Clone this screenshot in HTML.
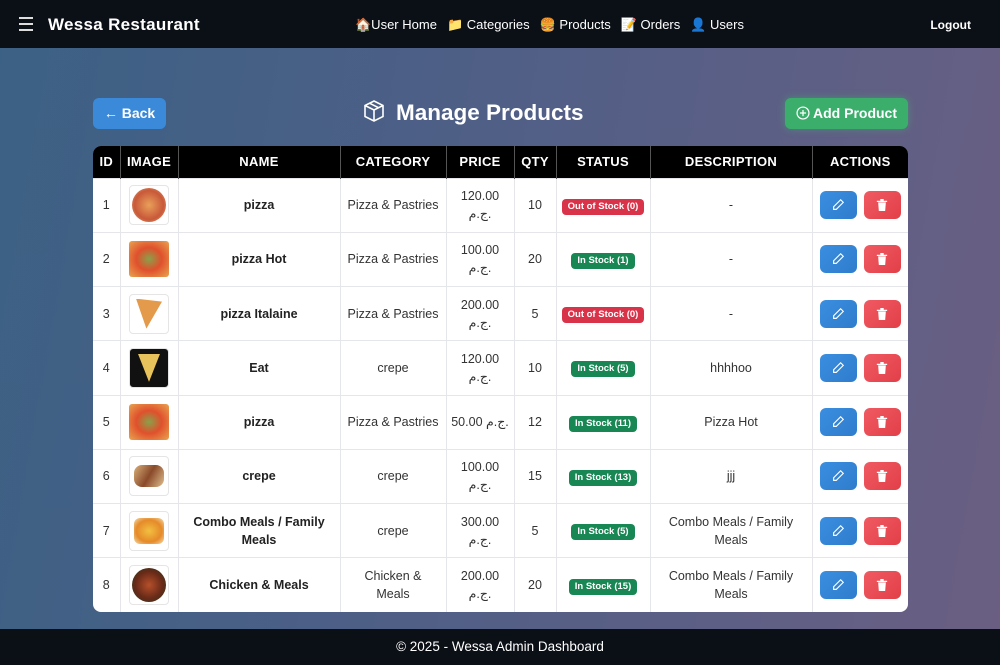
<!DOCTYPE html>
<html><head><meta charset="utf-8"><style>
*{box-sizing:border-box;margin:0;padding:0}
body{width:1000px;height:665px;overflow:hidden;font-family:"Liberation Sans","Noto Sans CJK SC",sans-serif;background:linear-gradient(100deg,#3b6184 0%,#4d5f86 40%,#5e5f85 75%,#6a5f82 100%);position:relative}
.nav{position:absolute;top:0;left:0;width:1000px;height:48px;background:#0b0f16;color:#fff}
.nav .brand{position:absolute;left:48px;top:15px;font-size:17px;font-weight:bold;letter-spacing:.3px}
.nav .ham{position:absolute;left:19px;top:17px;width:14px}
.nav .ham i{display:block;height:2px;background:#ddd;margin-bottom:4px}
.nav .links{position:absolute;left:355px;top:17px;font-size:13px;white-space:nowrap}
.nav .links span{margin-right:10px}
.nav .logout{position:absolute;right:29px;top:18px;font-size:12px;font-weight:bold}
.btn{position:absolute;top:98px;height:31px;border-radius:6px;color:#fff;font-weight:bold;font-size:14px;line-height:31px;text-align:center}
.back{left:93px;width:73px;background:#3a8ad9}
.add{left:785px;width:123px;background:#3cae6c;box-shadow:0 0 8px rgba(60,200,110,.4)}
h1{position:absolute;left:362px;top:99px;color:#fff;font-size:22.5px;font-weight:bold}
table{position:absolute;left:93px;top:146px;width:815px;border-collapse:collapse;table-layout:fixed;background:#fff;border-radius:8px;overflow:hidden;font-size:12.5px;color:#333}
th{background:#000;color:#fff;height:32px;font-size:13px;border-left:1px solid #555;letter-spacing:.3px}
th:first-child{border-left:none}
td{height:54.25px;text-align:center;border-left:1px solid #e4e6e9;border-top:1px solid #e4e6e9;line-height:18px}
td:first-child{border-left:none}
td.n{font-weight:bold;color:#222}
.img{width:40px;height:40px;margin:0 auto;border:1px solid #e5e5e5;border-radius:4px;display:flex;align-items:center;justify-content:center;background:#fff}
.img i{display:block;width:34px;height:34px;border-radius:50%}
.b{display:inline-block;color:#fff;font-weight:bold;font-size:9.5px;padding:2px 6px;border-radius:4px;line-height:12px}
.r{background:#d9334a}.g{background:#198754}
.act{display:flex;gap:7px;justify-content:center}
.act span{width:37px;height:28px;border-radius:6px;display:flex;align-items:center;justify-content:center}
.e{background:linear-gradient(135deg,#3a8ee0,#2f7ccc)}
.d{background:linear-gradient(135deg,#f05a62,#e23f48)}
.foot{position:absolute;left:0;top:629px;width:1000px;height:36px;background:#0b0f16;color:#fff;text-align:center;font-size:13.5px;line-height:36px}
</style></head><body>
<div class="nav"><div class="ham"><i></i><i></i><i></i></div><div class="brand">Wessa Restaurant</div>
<div class="links"><span>🏠User Home</span><span>📁 Categories</span><span>🍔 Products</span><span>📝 Orders</span><span>👤 Users</span></div>
<div class="logout">Logout</div></div>
<div class="btn back">← Back</div>
<h1><svg width="24" height="24" viewBox="0 0 24 24" fill="none" stroke="#fff" stroke-width="1.6" style="vertical-align:-3px;margin-right:10px"><path d="M12 2l9 4.5v11L12 22l-9-4.5v-11z M3 6.5L12 11l9-4.5 M12 11v11 M7.5 4.2l9 4.5"/></svg>Manage Products</h1>
<div class="btn add"><svg width="14" height="14" viewBox="0 0 16 16" fill="none" stroke="#fff" stroke-width="1.4" style="vertical-align:-2px;margin-right:3px"><circle cx="8" cy="8" r="6.8"/><path d="M8 4.5v7M4.5 8h7"/></svg>Add Product</div>
<table>
<colgroup><col style="width:27px"><col style="width:58px"><col style="width:162px"><col style="width:106px"><col style="width:68px"><col style="width:42px"><col style="width:94px"><col style="width:162px"><col style="width:96px"></colgroup>
<tr><th>ID</th><th>IMAGE</th><th>NAME</th><th>CATEGORY</th><th>PRICE</th><th>QTY</th><th>STATUS</th><th>DESCRIPTION</th><th>ACTIONS</th></tr>
<tr><td>1</td><td><div class="img"><i style="background:radial-gradient(#e9a05a,#c8593a 60%,#e6b27a)"></i></div></td><td class="n">pizza</td><td>Pizza &amp; Pastries</td><td>120.00<br>ج.م.</td><td>10</td><td><span class="b r">Out of Stock (0)</span></td><td>-</td><td><div class="act"><span class="e"><svg width="14" height="14" viewBox="0 0 16 16" fill="none" stroke="#fff" stroke-width="1.3"><path d="M11 2l3 3-8 8H3v-3z"/></svg></span><span class="d"><svg width="12" height="14" viewBox="0 0 14 16" fill="#fff"><path d="M1 3h12v1.5H1zM5 1h4v2H5zM2.5 5h9l-.8 10H3.3z"/></svg></span></div></td></tr>
<tr><td>2</td><td><div class="img" style="border:none"><i style="border-radius:3px;width:40px;height:36px;background:radial-gradient(#8aa04a,#e0502c 45%,#e8a550)"></i></div></td><td class="n">pizza Hot</td><td>Pizza &amp; Pastries</td><td>100.00<br>ج.م.</td><td>20</td><td><span class="b g">In Stock (1)</span></td><td>-</td><td><div class="act"><span class="e"><svg width="14" height="14" viewBox="0 0 16 16" fill="none" stroke="#fff" stroke-width="1.3"><path d="M11 2l3 3-8 8H3v-3z"/></svg></span><span class="d"><svg width="12" height="14" viewBox="0 0 14 16" fill="#fff"><path d="M1 3h12v1.5H1zM5 1h4v2H5zM2.5 5h9l-.8 10H3.3z"/></svg></span></div></td></tr>
<tr><td>3</td><td><div class="img"><i style="border-radius:0;width:26px;height:30px;clip-path:polygon(0 0,100% 10%,40% 100%);background:#e39a4a"></i></div></td><td class="n">pizza Italaine</td><td>Pizza &amp; Pastries</td><td>200.00<br>ج.م.</td><td>5</td><td><span class="b r">Out of Stock (0)</span></td><td>-</td><td><div class="act"><span class="e"><svg width="14" height="14" viewBox="0 0 16 16" fill="none" stroke="#fff" stroke-width="1.3"><path d="M11 2l3 3-8 8H3v-3z"/></svg></span><span class="d"><svg width="12" height="14" viewBox="0 0 14 16" fill="#fff"><path d="M1 3h12v1.5H1zM5 1h4v2H5zM2.5 5h9l-.8 10H3.3z"/></svg></span></div></td></tr>
<tr><td>4</td><td><div class="img" style="background:#111"><i style="border-radius:0;width:22px;height:28px;clip-path:polygon(0 0,100% 0,50% 100%);background:#e8c25a"></i></div></td><td class="n">Eat</td><td>crepe</td><td>120.00<br>ج.م.</td><td>10</td><td><span class="b g">In Stock (5)</span></td><td>hhhhoo</td><td><div class="act"><span class="e"><svg width="14" height="14" viewBox="0 0 16 16" fill="none" stroke="#fff" stroke-width="1.3"><path d="M11 2l3 3-8 8H3v-3z"/></svg></span><span class="d"><svg width="12" height="14" viewBox="0 0 14 16" fill="#fff"><path d="M1 3h12v1.5H1zM5 1h4v2H5zM2.5 5h9l-.8 10H3.3z"/></svg></span></div></td></tr>
<tr><td>5</td><td><div class="img" style="border:none"><i style="border-radius:3px;width:40px;height:36px;background:radial-gradient(#8aa04a,#e0502c 45%,#e8a550)"></i></div></td><td class="n">pizza</td><td>Pizza &amp; Pastries</td><td>50.00 ج.م.</td><td>12</td><td><span class="b g">In Stock (11)</span></td><td>Pizza Hot</td><td><div class="act"><span class="e"><svg width="14" height="14" viewBox="0 0 16 16" fill="none" stroke="#fff" stroke-width="1.3"><path d="M11 2l3 3-8 8H3v-3z"/></svg></span><span class="d"><svg width="12" height="14" viewBox="0 0 14 16" fill="#fff"><path d="M1 3h12v1.5H1zM5 1h4v2H5zM2.5 5h9l-.8 10H3.3z"/></svg></span></div></td></tr>
<tr><td>6</td><td><div class="img"><i style="border-radius:8px;width:30px;height:22px;background:linear-gradient(120deg,#d9b07a,#8a4a2a,#e0c090)"></i></div></td><td class="n">crepe</td><td>crepe</td><td>100.00<br>ج.م.</td><td>15</td><td><span class="b g">In Stock (13)</span></td><td>jjj</td><td><div class="act"><span class="e"><svg width="14" height="14" viewBox="0 0 16 16" fill="none" stroke="#fff" stroke-width="1.3"><path d="M11 2l3 3-8 8H3v-3z"/></svg></span><span class="d"><svg width="12" height="14" viewBox="0 0 14 16" fill="#fff"><path d="M1 3h12v1.5H1zM5 1h4v2H5zM2.5 5h9l-.8 10H3.3z"/></svg></span></div></td></tr>
<tr><td>7</td><td><div class="img"><i style="border-radius:6px;width:30px;height:26px;background:radial-gradient(#f2c040,#e58a2a 60%,#f5e0b0)"></i></div></td><td class="n">Combo Meals / Family Meals</td><td>crepe</td><td>300.00<br>ج.م.</td><td>5</td><td><span class="b g">In Stock (5)</span></td><td>Combo Meals / Family Meals</td><td><div class="act"><span class="e"><svg width="14" height="14" viewBox="0 0 16 16" fill="none" stroke="#fff" stroke-width="1.3"><path d="M11 2l3 3-8 8H3v-3z"/></svg></span><span class="d"><svg width="12" height="14" viewBox="0 0 14 16" fill="#fff"><path d="M1 3h12v1.5H1zM5 1h4v2H5zM2.5 5h9l-.8 10H3.3z"/></svg></span></div></td></tr>
<tr><td>8</td><td><div class="img"><i style="background:radial-gradient(#b5502a,#6a2a18 55%,#1e3a1e)"></i></div></td><td class="n">Chicken &amp; Meals</td><td>Chicken &amp;<br>Meals</td><td>200.00<br>ج.م.</td><td>20</td><td><span class="b g">In Stock (15)</span></td><td>Combo Meals / Family Meals</td><td><div class="act"><span class="e"><svg width="14" height="14" viewBox="0 0 16 16" fill="none" stroke="#fff" stroke-width="1.3"><path d="M11 2l3 3-8 8H3v-3z"/></svg></span><span class="d"><svg width="12" height="14" viewBox="0 0 14 16" fill="#fff"><path d="M1 3h12v1.5H1zM5 1h4v2H5zM2.5 5h9l-.8 10H3.3z"/></svg></span></div></td></tr>
</table>
<div class="foot">© 2025 - Wessa Admin Dashboard</div>
</body></html>
